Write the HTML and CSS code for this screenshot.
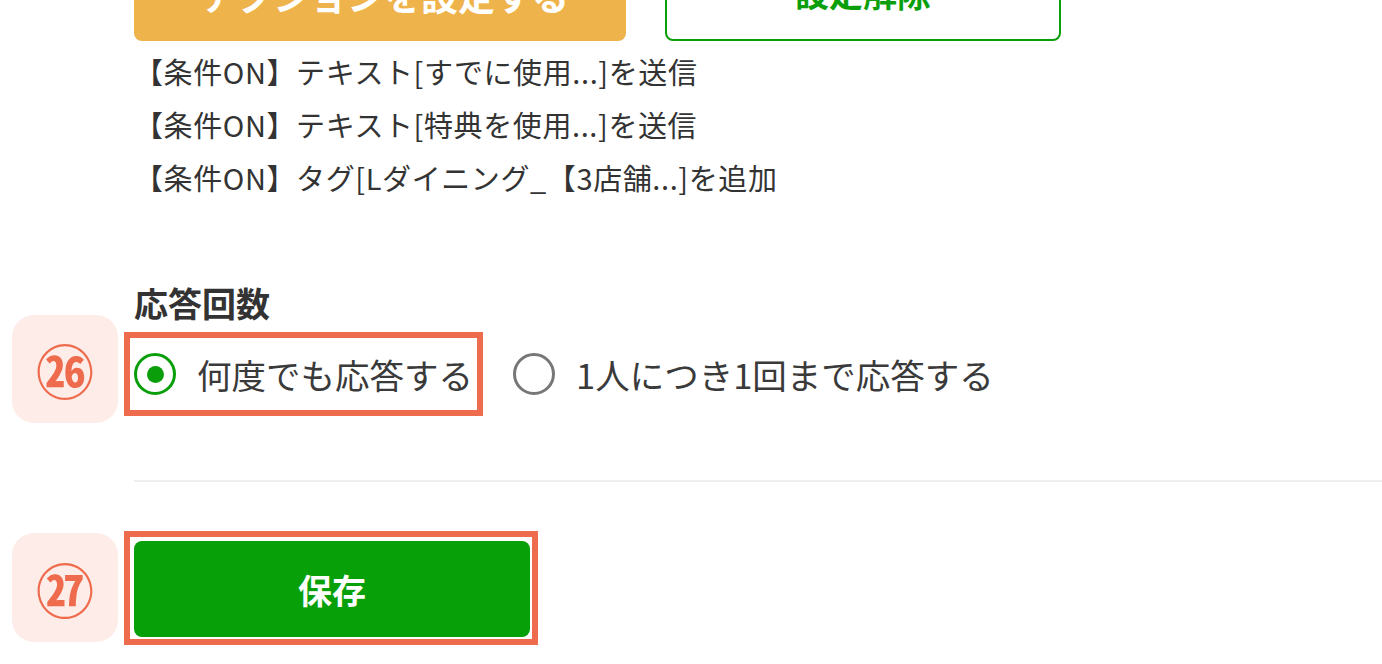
FILE: index.html
```html
<!DOCTYPE html>
<html lang="ja">
<head>
<meta charset="utf-8">
<title>応答設定</title>
<link rel="stylesheet" href="styles.css">
</head>
<body>
<div class="page">
  <div class="actions">
    <button class="btn btn-orange">アクションを設定する</button>
    <button class="btn btn-outline">設定解除</button>
  </div>
  <ul class="cond-list">
    <li>【条件ON】テキスト[すでに使用...]を送信</li>
    <li>【条件ON】テキスト[特典を使用...]を送信</li>
    <li>【条件ON】タグ[Lダイニング_【3店舗...]を追加</li>
  </ul>

  <h2 class="heading">応答回数</h2>
  <div class="radio-row">
    <div class="annot">
      <span class="badge"><span class="num">㉖</span></span>
      <label class="radio hl">
        <span class="circle checked"></span>
        <span class="label">何度でも応答する</span>
      </label>
    </div>
    <label class="radio">
      <span class="circle"></span>
      <span class="label">1人につき1回まで応答する</span>
    </label>
  </div>

  <hr class="divider">

  <div class="annot save-row">
    <span class="badge badge-save"><span class="num">㉗</span></span>
    <div class="hl hl-save">
      <button class="btn-save">保存</button>
    </div>
  </div>
</div>
</body>
</html>
```

FILE: styles.css
```css
* { box-sizing: border-box; }
html, body { margin: 0; padding: 0; background: #fff; }
body {
  font-family: "Noto Sans CJK JP", "Noto Sans", sans-serif;
  color: #333;
  overflow: hidden;
  height: 664px;
}
.page {
  padding-left: 134px;
}
.actions {
  display: flex;
  gap: 39px;
  margin-top: -47px;
}
.btn {
  height: 88px;
  border-radius: 8px;
  font-family: inherit;
  font-weight: 700;
  display: flex;
  align-items: center;
  justify-content: center;
  padding: 0;
}
.btn-orange {
  width: 492px;
  background: #efb34c;
  border: none;
  color: #fff;
  font-size: 37px;
  padding-left: 10px;
  padding-bottom: 4px;
}
.btn-outline {
  width: 396px;
  background: #fff;
  border: 2px solid #0a9f0a;
  color: #0a9f0a;
  font-size: 34px;
  padding-bottom: 10px;
}
.cond-list {
  list-style: none;
  margin: 4px 0 0;
  padding: 0;
}
.cond-list li {
  font-size: 29px;
  letter-spacing: 0.6px;
  line-height: 53px;
  height: 53px;
  white-space: nowrap;
}
.heading {
  margin: 77px 0 0;
  font-size: 34px;
  line-height: 44px;
  font-weight: 700;
}
.radio-row {
  display: flex;
  align-items: center;
  gap: 30px;
  margin-top: 7px;
}
.annot {
  position: relative;
  display: inline-flex;
}
.radio {
  display: inline-flex;
  align-items: center;
  gap: 21px;
  height: 64px;
}
.hl {
  border: 6px solid #ee6c4d;
  padding: 4px;
  margin-left: -10px;
  height: auto;
}
.circle {
  width: 42px;
  height: 42px;
  border-radius: 50%;
  border: 3px solid #777;
  display: flex;
  align-items: center;
  justify-content: center;
  flex: none;
}
.circle.checked { border-color: #0a9f0a; }
.circle.checked::after {
  content: "";
  width: 17px;
  height: 17px;
  border-radius: 50%;
  background: #0a9f0a;
}
.label {
  font-size: 34.5px;
  line-height: 64px;
  white-space: nowrap;
  color: #3a3a3a;
}
.badge {
  position: absolute;
  left: -122px;
  top: -17px;
  width: 106px;
  height: 108px;
  border-radius: 22px;
  background: #fdece8;
  display: flex;
  align-items: center;
  justify-content: center;
}
.badge .num {
  color: #ee6c4d;
  font-size: 58px;
  line-height: 1;
  font-weight: 700;
}
.divider {
  border: none;
  height: 2px;
  background: #eeeeee;
  margin: 64px 0 0;
}
.save-row { margin-top: 49px; }
.hl-save {
  padding: 4px 2px 2px 4px;
  border-width: 6px;
}
.badge-save { top: 2px; height: 109px; }
.btn-save {
  width: 396px;
  height: 96px;
  background: #08a008;
  border: none;
  border-radius: 8px;
  color: #fff;
  font-family: inherit;
  font-size: 34px;
  font-weight: 700;
  display: block;
}
```
